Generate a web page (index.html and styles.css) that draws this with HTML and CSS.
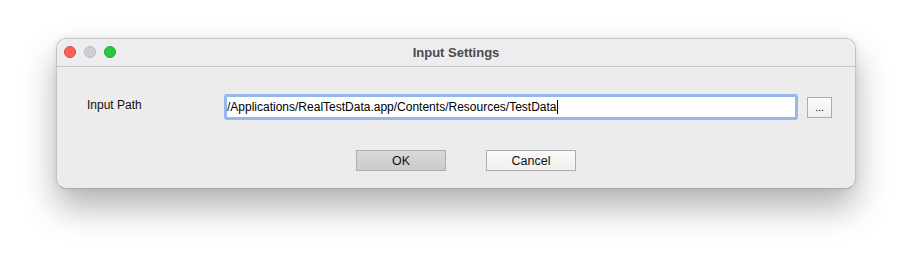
FILE: index.html
```html
<html lang="en">
<head>
  <meta charset="UTF-8" />
  <title>Input Settings</title>
  <link rel="stylesheet" href="styles.css">
</head>
<body>
  <main class="desk">
    <section class="window">
      <header class="window__bar">
        <div class="lights">
          <span class="light light--close"></span>
          <span class="light light--min"></span>
          <span class="light light--max"></span>
        </div>
        <h1 class="window__title">Input Settings</h1>
      </header>
      <div class="window__body">
        <div class="path-row">
          <label class="path-row__label" for="path">Input Path</label>
          <div class="path-row__field">
            <span class="path-row__text">/Applications/RealTestData.app/Contents/Resources/TestData</span><span class="caret"></span>
          </div>
          <button class="btn btn--browse" type="button">...</button>
        </div>
        <div class="actions">
          <button class="btn btn--default" type="button">OK</button>
          <button class="btn" type="button">Cancel</button>
        </div>
      </div>
    </section>
  </main>
</body>
</html>
```
FILE: styles.css
```css
body{
  margin: 0;
  background: #fff;
  font-family: "Liberation Sans", Arial, sans-serif;
}

.desk{
  width: 912px;
  height: 263px;
  padding: 38px 0 0 56px;
  box-sizing: border-box;
}

.window{
  width: 800px;
  height: 151px;
  box-sizing: border-box;
  border: 1px solid #c4c4c4;
  border-bottom-color: #a9a9a9;
  border-radius: 10px;
  background: #ececec;
  overflow: hidden;
  box-shadow: 0 18px 34px rgba(0,0,0,.3), 0 0 6px rgba(0,0,0,.08);
}

.window__bar{
  position: relative;
  height: 27px;
  background: #ededf0;
  border-bottom: 1px solid #c9c9cb;
  display: flex;
  align-items: center;
  justify-content: center;
}

.lights{
  position: absolute;
  left: 7px;
  top: 7px;
  display: flex;
  gap: 8px;
}

.light{
  width: 12px;
  height: 12px;
  border-radius: 50%;
  box-sizing: border-box;
}

.light--close{ background: #fe5f57; border: 1px solid #e0443e; }
.light--min{ background: #cfcfd3; border: 1px solid #b9b9bd; }
.light--max{ background: #2ac840; border: 1px solid #1eaa30; }

.window__title{
  margin: 0;
  font-size: 13px;
  font-weight: bold;
  color: #4a4a4a;
}

.window__body{
  padding: 27px 23px 0 30px;
}

.path-row{
  display: flex;
  align-items: center;
}

.path-row__label{
  width: 137px;
  font-size: 12px;
  color: #111;
  margin-top: -5px;
}

.path-row__field{
  width: 574px;
  height: 26px;
  box-sizing: border-box;
  border: 3px solid #94b8ec;
  border-radius: 3px;
  background: #fff;
  display: flex;
  align-items: center;
  font-size: 12px;
  color: #000;
}

.caret{
  width: 1px;
  height: 14px;
  background: #000;
}

.btn{
  font-family: inherit;
  font-size: 12.5px;
  color: #111;
  width: 90px;
  height: 21px;
  padding: 0;
  border: 1px solid #adadad;
  background: linear-gradient(#fbfbfb, #efefef);
}

.btn--browse{
  width: 25px;
  margin-left: 9px;
  font-size: 11px;
  line-height: 1;
}

.btn--default{
  background: linear-gradient(#d9d9d9, #cbcbcb);
}

.actions{
  display: flex;
  gap: 40px;
  margin-top: 30px;
  padding-left: 269px;
}
```
